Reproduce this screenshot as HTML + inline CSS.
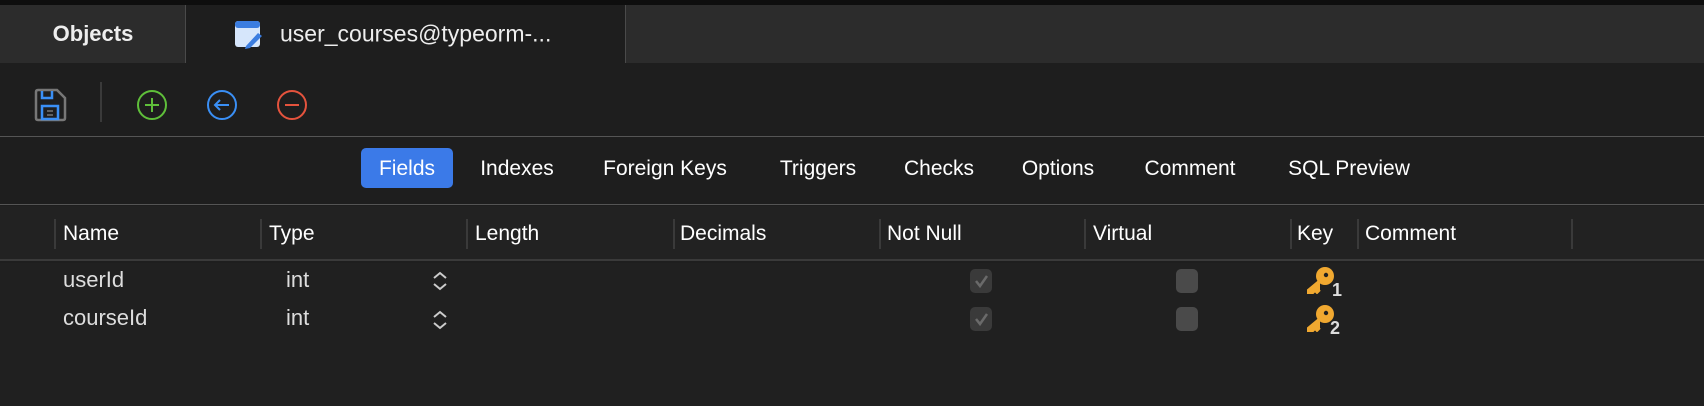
<!DOCTYPE html>
<html><head><meta charset="utf-8"><style>
*{margin:0;padding:0;box-sizing:border-box}
body{width:1704px;height:406px;background:#1e1e1e;font-family:"Liberation Sans",sans-serif;color:#fff;position:relative;overflow:hidden}
.a{position:absolute}
.t{position:absolute;font-size:21px;white-space:nowrap;transform:translate(-50%,-50%)}
.l{position:absolute;font-size:21px;white-space:nowrap;transform:translateY(-50%)}
.r{font-size:22px;color:#ddd}
.sep{position:absolute;width:2px;height:30px;top:219px;background:#3a3a3a}
.cb{position:absolute;width:22px;height:24px;border-radius:5px;background:#4a4a4a}
</style></head><body>
<div class="a" style="left:0;top:0;width:1704px;height:5px;background:#0e0e0e"></div>
<div class="a" style="left:0;top:5px;width:1704px;height:58px;background:#2c2c2c"></div>
<div class="a" style="left:185px;top:5px;width:441px;height:58px;background:#1e1e1e;border-left:1px solid #4a4a4a;border-right:1px solid #4a4a4a"></div>
<div class="t" style="left:93px;top:34px;font-size:22px;font-weight:bold;color:#eee">Objects</div>
<svg class="a" style="left:234px;top:20px" width="30" height="30" viewBox="0 0 30 30"><rect x="1" y="1" width="25" height="26" rx="3" fill="#d6e6fb"/><rect x="1" y="1" width="25" height="7" rx="3" fill="#3b7de0"/><path d="M12 26 L24 13 L28 16 L16 28 L11 29Z" fill="#3b7de0"/></svg>
<div class="l" style="left:280px;top:34px;font-size:23px;color:#eee">user_courses@typeorm-...</div>
<div class="a" style="left:0;top:63px;width:1704px;height:74px;background:#1e1e1e;border-bottom:1px solid #555"></div>
<svg class="a" style="left:33px;top:88px" width="34" height="34" viewBox="0 0 34 34"><path d="M5 2 H24 L32 10 V30 Q32 32 30 32 H5 Q3 32 3 30 V4 Q3 2 5 2Z" fill="none" stroke="#777" stroke-width="2.5"/><path d="M9 3 V10 H19 V3" fill="none" stroke="#3a8ff5" stroke-width="2.5"/><rect x="9" y="18" width="16" height="13" fill="none" stroke="#3a8ff5" stroke-width="2.5"/><path d="M14 23h6M14 27h6" stroke="#777" stroke-width="1.5"/></svg>
<div class="a" style="left:100px;top:82px;width:2px;height:40px;background:#3a3a3a"></div>
<svg class="a" style="left:136px;top:89px" width="32" height="32"><circle cx="16" cy="16" r="14" fill="none" stroke="#5fbf3a" stroke-width="2"/><path d="M16 9v14M9 16h14" stroke="#5fbf3a" stroke-width="2"/></svg>
<svg class="a" style="left:206px;top:89px" width="32" height="32"><circle cx="16" cy="16" r="14" fill="none" stroke="#3a8ff5" stroke-width="2"/><path d="M23 16H9M14 11l-5 5 5 5" fill="none" stroke="#3a8ff5" stroke-width="2"/></svg>
<svg class="a" style="left:276px;top:89px" width="32" height="32"><circle cx="16" cy="16" r="14" fill="none" stroke="#e5533d" stroke-width="2"/><path d="M9 16h14" stroke="#e5533d" stroke-width="2"/></svg>
<div class="a" style="left:0;top:138px;width:1704px;height:67px;background:#1e1e1e;border-bottom:1px solid #555"></div>
<div class="a" style="left:361px;top:148px;width:92px;height:40px;border-radius:5px;background:#3b7ae8"></div>
<div class="t" style="left:407px;top:169px">Fields</div>
<div class="t" style="left:517px;top:169px">Indexes</div>
<div class="t" style="left:665px;top:169px">Foreign Keys</div>
<div class="t" style="left:818px;top:169px">Triggers</div>
<div class="t" style="left:939px;top:169px">Checks</div>
<div class="t" style="left:1058px;top:169px">Options</div>
<div class="t" style="left:1190px;top:169px">Comment</div>
<div class="t" style="left:1349px;top:169px">SQL Preview</div>
<div class="a" style="left:0;top:206px;width:1704px;height:55px;background:#222;border-bottom:2px solid #3a3a3a"></div>
<div class="a" style="left:0;top:263px;width:1704px;height:143px;background:#202020"></div>
<div class="sep" style="left:54px"></div><div class="sep" style="left:260px"></div><div class="sep" style="left:466px"></div><div class="sep" style="left:673px"></div><div class="sep" style="left:879px"></div><div class="sep" style="left:1084px"></div><div class="sep" style="left:1290px"></div><div class="sep" style="left:1357px"></div><div class="sep" style="left:1571px"></div>
<div class="l" style="left:63px;top:234px">Name</div>
<div class="l" style="left:269px;top:234px">Type</div>
<div class="l" style="left:475px;top:234px">Length</div>
<div class="l" style="left:680px;top:234px">Decimals</div>
<div class="l" style="left:887px;top:234px">Not Null</div>
<div class="l" style="left:1093px;top:234px">Virtual</div>
<div class="l" style="left:1297px;top:234px">Key</div>
<div class="l" style="left:1365px;top:234px">Comment</div>
<div class="l r" style="left:63px;top:280px">userId</div>
<div class="l r" style="left:286px;top:280px">int</div>
<div class="l r" style="left:63px;top:318px">courseId</div>
<div class="l r" style="left:286px;top:318px">int</div>
<svg class="a" style="left:432px;top:271px" width="16" height="20"><path d="M2 7l6-5 6 5M2 13l6 5 6-5" fill="none" stroke="#ccc" stroke-width="2"/></svg>
<svg class="a" style="left:432px;top:310px" width="16" height="20"><path d="M2 7l6-5 6 5M2 13l6 5 6-5" fill="none" stroke="#ccc" stroke-width="2"/></svg>
<div class="cb" style="left:970px;top:269px;background:#3a3a3a"></div><svg class="a" style="left:970px;top:269px" width="22" height="24"><path d="M6 12l4 5 7-10" fill="none" stroke="#6a6a6a" stroke-width="2.5"/></svg>
<div class="cb" style="left:970px;top:307px;background:#3a3a3a"></div><svg class="a" style="left:970px;top:307px" width="22" height="24"><path d="M6 12l4 5 7-10" fill="none" stroke="#6a6a6a" stroke-width="2.5"/></svg>
<div class="cb" style="left:1176px;top:269px"></div>
<div class="cb" style="left:1176px;top:307px"></div>
<svg class="a" style="left:1306px;top:266px" width="30" height="28"><circle cx="19" cy="10" r="9" fill="#f0a830"/><circle cx="20" cy="9" r="2.2" fill="#202020"/><path d="M14 14L2 24v3h5l2-2 2 2 3-3" fill="#f0a830" stroke="#f0a830" stroke-width="2"/></svg>
<div class="a" style="left:1332px;top:280px;font-size:18px;font-weight:bold;color:#ddd">1</div>
<svg class="a" style="left:1306px;top:304px" width="30" height="28"><circle cx="19" cy="10" r="9" fill="#f0a830"/><circle cx="20" cy="9" r="2.2" fill="#202020"/><path d="M14 14L2 24v3h5l2-2 2 2 3-3" fill="#f0a830" stroke="#f0a830" stroke-width="2"/></svg>
<div class="a" style="left:1330px;top:318px;font-size:18px;font-weight:bold;color:#ddd">2</div>
</body></html>
